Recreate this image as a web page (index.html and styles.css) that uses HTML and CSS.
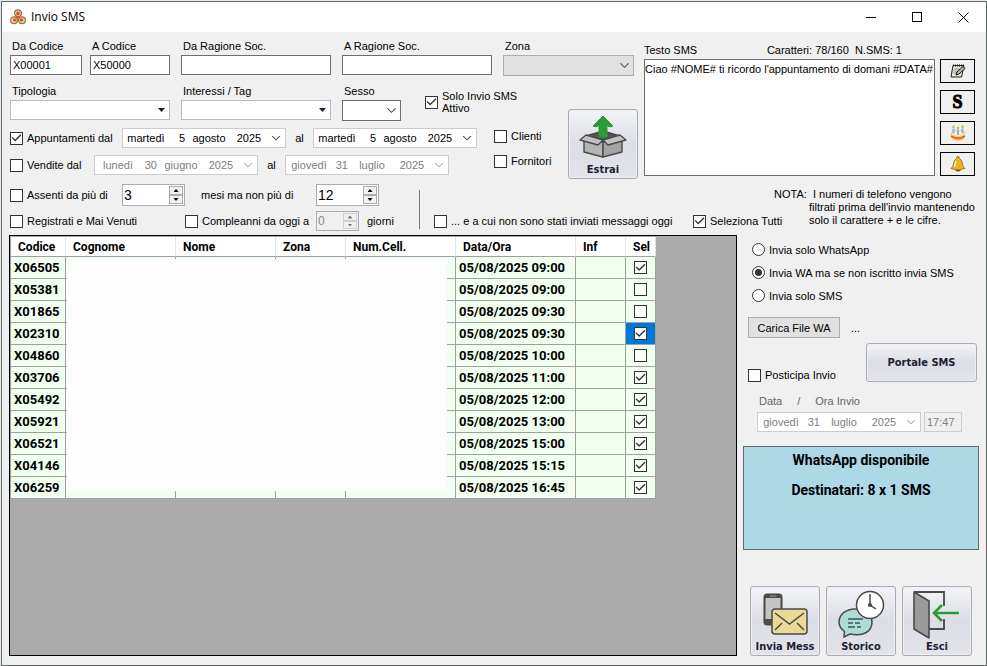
FILE: index.html
```html
<!DOCTYPE html>
<html lang="it">
<head>
<meta charset="utf-8">
<title>Invio SMS</title>
<link rel="stylesheet" href="styles.css">
</head>
<body>
<main class="window">
  <header class="titlebar">
    <svg class="app-icon" width="16" height="16" viewBox="0 0 16 16"><g fill="#e8dcb8" stroke="#8a7442" stroke-width="1.2"><circle cx="8" cy="4.2" r="3.4"/><circle cx="4" cy="11.3" r="3.4"/><circle cx="12" cy="11.3" r="3.4"/></g><g fill="#e8541c"><circle cx="8" cy="4.6" r="2"/><circle cx="4.6" cy="11" r="1.8"/><circle cx="11.6" cy="11" r="1.8"/><circle cx="8" cy="8.8" r="1.2"/></g></svg>
    <h1>Invio SMS</h1>
    <div class="window-buttons">
      <button type="button" aria-label="Riduci"><svg width="11" height="11" viewBox="0 0 11 11"><path d="M0 5.5H10" stroke="#000"/></svg></button>
      <button type="button" aria-label="Ingrandisci"><svg width="11" height="11" viewBox="0 0 11 11"><rect x=".5" y=".5" width="9" height="9" fill="none" stroke="#000"/></svg></button>
      <button type="button" aria-label="Chiudi"><svg width="11" height="11" viewBox="0 0 11 11"><path d="M.5 .5L10.5 10.5M10.5 .5L.5 10.5" stroke="#000"/></svg></button>
    </div>
  </header>

  <form class="content">
    <div class="top">
      <section class="filters">
        <div class="fields">
          <div class="pair">
            <div class="field code-from"><label for="dc">Da Codice</label><input id="dc" type="text" value="X00001"></div>
            <div class="field code-to"><label for="ac">A Codice</label><input id="ac" type="text" value="X50000"></div>
          </div>
          <div class="field"><label for="dr">Da Ragione Soc.</label><input id="dr" type="text"></div>
          <div class="field"><label for="ar">A Ragione Soc.</label><input id="ar" type="text"></div>
          <div class="field"><label for="zona">Zona</label><span class="combo off"><select id="zona" disabled><option></option></select><i class="chevron"></i></span></div>
        </div>
        <div class="lower">
          <div class="lower-rows">
            <div class="fields second">
              <div class="field"><label for="tip">Tipologia</label><span class="combo flat"><select id="tip"><option></option></select><i class="triangle"></i></span></div>
              <div class="field"><label for="int">Interessi / Tag</label><span class="combo flat"><select id="int"><option></option></select><i class="triangle"></i></span></div>
              <div class="gender">
                <div class="field sex"><label for="sex">Sesso</label><span class="combo"><select id="sex"><option></option></select><i class="chevron"></i></span></div>
                <label class="check active-only"><input type="checkbox" checked><span>Solo Invio SMS<br>Attivo</span></label>
              </div>
            </div>
            <div class="scope">
              <div class="ranges">
                <div class="range">
                  <label class="check first"><input type="checkbox" checked><span>Appuntamenti dal</span></label>
                  <button type="button" class="date"><span>martedì</span><span class="day">5</span><span>agosto</span><span>2025</span><i class="chevron"></i></button>
                  <span class="to">al</span>
                  <button type="button" class="date"><span>martedì</span><span class="day">5</span><span>agosto</span><span>2025</span><i class="chevron"></i></button>
                </div>
                <div class="range">
                  <label class="check second-label"><input type="checkbox"><span>Vendite dal</span></label>
                  <button type="button" class="date" disabled><span>lunedì</span><span class="day">30</span><span>giugno</span><span>2025</span><i class="chevron"></i></button>
                  <span class="to">al</span>
                  <button type="button" class="date" disabled><span>giovedì</span><span class="day">31</span><span>luglio</span><span>2025</span><i class="chevron"></i></button>
                </div>
              </div>
              <div class="who">
                <label class="check"><input type="checkbox"><span>Clienti</span></label>
                <label class="check"><input type="checkbox"><span>Fornitori</span></label>
              </div>
            </div>
          </div>
          <button type="button" class="tile">
            <svg width="50" height="46" viewBox="0 0 50 46"><g stroke="#4a4a4a" stroke-width="1.4" stroke-linejoin="round"><path d="M8 23L25 18L42 23L25 28Z" fill="#555"/><path d="M6 25L25 29V44L6 39Z" fill="#b4b4b4"/><path d="M44 25L25 29V44L44 39Z" fill="#a4a4a4"/><path d="M8 22L25 27L20 32L2 27Z" fill="#c2c2c2"/><path d="M42 22L25 27L30 32L48 27Z" fill="#c2c2c2"/></g><path d="M25 3L35 13Q32 15 29 12.500V24H21V12.500Q18 15 15 13Z" fill="#2a9b35" stroke="#2a9b35" stroke-linejoin="round"/></svg>
            <span>Estrai</span>
          </button>
        </div>
      </section>

      <section class="message">
        <div class="message-head"><label for="msg">Testo SMS</label><output>Caratteri: 78/160 &nbsp;N.SMS: 1</output></div>
        <div class="message-body">
          <textarea id="msg" wrap="off">Ciao #NOME# ti ricordo l'appuntamento di domani #DATA#</textarea>
          <div class="tools">
            <button type="button" aria-label="Modifica testo"><svg width="16" height="16" viewBox="0 0 16 16"><path d="M3 2.500H14L11.500 14H1Z" fill="#e8e6de" stroke="#222"/><path d="M3 2.500H14" stroke="#111" stroke-width="2" stroke-dasharray="1 1"/><path d="M4 6H10M3.500 8H8M3 10H7" stroke="#999"/><path d="M6 12L7 9L13 3.500L15 5.500L9 11Z" fill="#c9b89a" stroke="#111"/></svg></button>
            <button type="button" class="letter">S</button>
            <button type="button" aria-label="Compleanno"><svg width="16" height="16" viewBox="0 0 16 16"><path d="M1 8V12Q2 15.500 8 15.500T15 12V8Z" fill="#f0b548"/><ellipse cx="8" cy="8.500" rx="7" ry="3" fill="#fff2c4" stroke="#f3cf6c"/><path d="M1 11Q8 15.500 15 11" stroke="#e2522d" stroke-width="1.400" fill="none"/><path d="M3.500 3.500V8.500M8 5V10M12.500 3.500V8.500" stroke="#7fb0f0" stroke-width="2"/><path d="M3.500 .5V3M8 2V4.500M12.500 .5V3" stroke="#c9b022" stroke-width="1.800"/></svg></button>
            <button type="button" aria-label="Promemoria"><svg width="16" height="16" viewBox="0 0 16 16"><path d="M7 .8H9L9.500 2.500Q12 3.500 12.500 8Q12.800 11 15 12.500L8 14L1 12.500Q3.200 11 3.500 8Q4 3.500 6.500 2.500Z" fill="#e9b425" stroke="#a87412"/><path d="M6 5Q5 8 4.500 11" stroke="#fff3a6" stroke-width="1.500" fill="none"/><path d="M5 14Q8 17 11 14Z" fill="#6b4a10"/></svg></button>
          </div>
        </div>
      </section>
    </div>

    <div class="criteria">
      <div class="criteria-rows">
        <div class="criteria-row">
          <label class="check absent"><input type="checkbox"><span>Assenti da più di</span></label>
          <span class="spin"><input type="text" value="3" aria-label="Mesi minimi"><span class="steps"><button type="button" aria-label="Aumenta"><i></i></button><button type="button" aria-label="Riduci"><i></i></button></span></span>
          <span class="months">mesi ma non più di</span>
          <span class="spin"><input type="text" value="12" aria-label="Mesi massimi"><span class="steps"><button type="button" aria-label="Aumenta"><i></i></button><button type="button" aria-label="Riduci"><i></i></button></span></span>
        </div>
        <div class="criteria-row">
          <label class="check registered"><input type="checkbox"><span>Registrati e Mai Venuti</span></label>
          <label class="check birthdays"><input type="checkbox"><span>Compleanni da oggi a</span></label>
          <span class="spin small"><input type="text" value="0" disabled aria-label="Giorni"><span class="steps"><button type="button" disabled aria-label="Aumenta"><i></i></button><button type="button" disabled aria-label="Riduci"><i></i></button></span></span>
          <span class="days">giorni</span>
        </div>
      </div>
      <div class="divider"></div>
      <label class="check not-sent"><input type="checkbox"><span>... e a cui non sono stati inviati messaggi oggi</span></label>
      <label class="check all"><input type="checkbox" checked><span>Seleziona Tutti</span></label>
      <p class="note">NOTA: &nbsp;I numeri di telefono vengono<br>filtrati prima dell'invio mantenendo<br>solo il carattere + e le cifre.</p>
    </div>

    <div class="bottom">
      <div class="grid-panel">
        <table>
          <colgroup><col class="c55"><col class="c110"><col class="c100"><col class="c70"><col class="c110"><col class="c120"><col class="c50"><col class="c30"></colgroup>
          <thead><tr><th>Codice</th><th>Cognome</th><th>Nome</th><th>Zona</th><th>Num.Cell.</th><th>Data/Ora</th><th>Inf</th><th>Sel</th></tr></thead>
          <tbody>
            <tr><td>X06505</td><td></td><td></td><td></td><td></td><td>05/08/2025 09:00</td><td></td><td><input type="checkbox" aria-label="X06505" checked></td></tr>
            <tr><td>X05381</td><td></td><td></td><td></td><td></td><td>05/08/2025 09:00</td><td></td><td><input type="checkbox" aria-label="X05381"></td></tr>
            <tr><td>X01865</td><td></td><td></td><td></td><td></td><td>05/08/2025 09:30</td><td></td><td><input type="checkbox" aria-label="X01865"></td></tr>
            <tr><td>X02310</td><td></td><td></td><td></td><td></td><td>05/08/2025 09:30</td><td></td><td class="current"><input type="checkbox" aria-label="X02310" checked></td></tr>
            <tr><td>X04860</td><td></td><td></td><td></td><td></td><td>05/08/2025 10:00</td><td></td><td><input type="checkbox" aria-label="X04860"></td></tr>
            <tr><td>X03706</td><td></td><td></td><td></td><td></td><td>05/08/2025 11:00</td><td></td><td><input type="checkbox" aria-label="X03706" checked></td></tr>
            <tr><td>X05492</td><td></td><td></td><td></td><td></td><td>05/08/2025 12:00</td><td></td><td><input type="checkbox" aria-label="X05492" checked></td></tr>
            <tr><td>X05921</td><td></td><td></td><td></td><td></td><td>05/08/2025 13:00</td><td></td><td><input type="checkbox" aria-label="X05921" checked></td></tr>
            <tr><td>X06521</td><td></td><td></td><td></td><td></td><td>05/08/2025 15:00</td><td></td><td><input type="checkbox" aria-label="X06521" checked></td></tr>
            <tr><td>X04146</td><td></td><td></td><td></td><td></td><td>05/08/2025 15:15</td><td></td><td><input type="checkbox" aria-label="X04146" checked></td></tr>
            <tr><td>X06259</td><td></td><td></td><td></td><td></td><td>05/08/2025 16:45</td><td></td><td><input type="checkbox" aria-label="X06259" checked></td></tr>
          </tbody>
        </table>
        <div class="veil"></div>
      </div>

      <aside class="side">
        <div class="radios">
          <label><input type="radio" name="mode"><span>Invia solo WhatsApp</span></label>
          <label><input type="radio" name="mode" checked><span>Invia WA ma se non iscritto invia SMS</span></label>
          <label><input type="radio" name="mode"><span>Invia solo SMS</span></label>
        </div>
        <div class="upload"><button type="button">Carica File WA</button><span>...</span></div>
        <div class="portal-row">
          <label class="check"><input type="checkbox"><span>Posticipa Invio</span></label>
          <button type="button" class="portal">Portale SMS</button>
        </div>
        <div class="schedule">
          <div class="schedule-labels"><span>Data</span><span>/</span><label for="time">Ora Invio</label></div>
          <div class="schedule-inputs">
            <button type="button" class="date" disabled><span>giovedì</span><span class="day">31</span><span>luglio</span><span>2025</span><i class="chevron"></i></button>
            <input id="time" type="text" value="17:47" disabled>
          </div>
        </div>
        <div class="status"><p>WhatsApp disponibile</p><p>Destinatari: 8 x 1 SMS</p></div>
        <div class="actions">
          <button type="button" class="tile">
            <svg width="50" height="46" viewBox="0 0 50 46"><rect x="4" y="4" width="18" height="31" rx="2.500" fill="#4d4d4d" stroke="#444"/><rect x="5.500" y="8" width="15" height="21" fill="#c9c4c4"/><path d="M10 6H16" stroke="#999"/><rect x="12" y="19" width="35" height="25" rx="3" fill="#e8d995" stroke="#4a4a4a" stroke-width="1.500"/><path d="M15 23L29.500 34L44 23M15 40L22 33M44 40L37 33" fill="none" stroke="#4a4a4a" stroke-width="1.500"/></svg>
            <span>Invia Mess</span>
          </button>
          <button type="button" class="tile">
            <svg width="50" height="48" viewBox="0 0 50 48"><path d="M19 19C10 19 3 24.500 3 32C3 36 5 39 8.500 41.500L8 47L14 44C28 47 36 41 36 32C36 24 29 19 19 19Z" fill="#aedbd6" stroke="#4a4a4a" stroke-width="1.500"/><path d="M12 29H27M12 33H17M19 33H24M12 37H19M21 37H25" stroke="#3b5557" stroke-width="1.500"/><circle cx="34" cy="15" r="13.500" fill="#fff" stroke="#4a4a4a" stroke-width="1.500"/><circle cx="34" cy="15" r="2" fill="#4a4a4a"/><path d="M34 4V15L40 19" fill="none" stroke="#4a4a4a" stroke-width="1.500"/></svg>
            <span>Storico</span>
          </button>
          <button type="button" class="tile">
            <svg width="50" height="50" viewBox="0 0 50 50"><path d="M2 2H32V16M32 29V39H17" fill="none" stroke="#4a4a4a" stroke-width="1.800"/><path d="M2 2L17 11V48L2 39Z" fill="#9b9b9b" stroke="#4a4a4a" stroke-width="1.600" stroke-linejoin="round"/><path d="M47 23H23M30 15L22 23L30 31" fill="none" stroke="#2a9b35" stroke-width="2.600"/></svg>
            <span>Esci</span>
          </button>
        </div>
      </aside>
    </div>
  </form>
</main>
</body>
</html>
```
FILE: styles.css
```css
* { box-sizing: border-box; }

body {
  margin: 0;
  background: #e3eced;
  color: #000;
  font: 11px/16px "Liberation Sans", Arial, sans-serif;
}

button, input, select, textarea {
  margin: 0;
  font: inherit;
  color: inherit;
  border-radius: 0;
}

.window {
  display: flex;
  flex-direction: column;
  min-height: calc(100vh - 1px);
  margin: 1px 0 0 1px;
  border: 1px solid #5f6664;
  background: #f0f0f0;
}

.titlebar {
  display: flex;
  align-items: center;
  height: 30px;
  padding-left: 8px;
  background: #fff;
}

.titlebar h1 {
  flex: 1;
  margin: 0 0 0 5px;
  font: 12px/16px "Open Sans", sans-serif;
}

.window-buttons { display: flex; }

.window-buttons button {
  display: grid;
  place-items: center;
  width: 46px;
  height: 30px;
  padding: 0;
  border: 0;
  background: none;
}

.content {
  flex: 1;
  display: flex;
  flex-direction: column;
  padding: 6px 6px 9px 8px;
}

/* Shared controls */

input[type="text"] {
  width: 100%;
  height: 20px;
  padding: 0 2px;
  border: 1px solid #6e6e6e;
  background: #fff;
}

input[type="checkbox"],
input[type="radio"] {
  appearance: none;
  flex: none;
  display: grid;
  place-items: center;
  width: 13px;
  height: 13px;
  border: 1px solid #333;
  background: #fff;
}

input[type="radio"] { border-radius: 50%; }

input[type="checkbox"]:checked::before {
  content: "";
  width: 11px;
  height: 11px;
  background: #333;
  clip-path: polygon(5% 48%, 14% 40%, 38% 64%, 86% 16%, 95% 25%, 38% 82%);
}

input[type="radio"]:checked::before {
  content: "";
  width: 7px;
  height: 7px;
  border-radius: 50%;
  background: #333;
}

.check {
  display: flex;
  align-items: center;
  flex: none;
  gap: 4px;
  white-space: nowrap;
}

.combo { display: grid; height: 21px; }

.combo > * { grid-area: 1 / 1; }

.combo select {
  appearance: none;
  width: 100%;
  height: 100%;
  border: 1px solid #6e6e6e;
  background: #fff;
}

.combo.flat { height: 20px; }
.combo.flat select { border-color: #b8bac6; }

.combo.off select {
  border-color: #adadad;
  background: #e1e1e1;
  opacity: 1;
}

.combo i {
  justify-self: end;
  align-self: center;
  margin-right: 5px;
  pointer-events: none;
}

.chevron {
  width: 9px;
  height: 5px;
  background: #444;
  clip-path: polygon(0 10%, 10% 0, 50% 76%, 90% 0, 100% 10%, 50% 100%);
}

.triangle {
  width: 7px;
  height: 4px;
  background: #1e1e32;
  clip-path: polygon(0 0, 100% 0, 50% 100%);
}

.date {
  display: grid;
  grid-template-columns: 42px 18px 48px 32px 22px;
  align-items: center;
  justify-items: center;
  flex: none;
  width: 164px;
  height: 20px;
  padding: 0 0 0 2px;
  border: 1px solid #ccc;
  background: #fff;
}

.date .day { justify-self: end; }
.date:disabled { color: #7d7d7d; }
.date:disabled .chevron { background: #aaa; }

.tile, .portal {
  border: 1px solid #a9abb8;
  border-radius: 3px;
  background: linear-gradient(#f3f4f7, #dcdee5 50%, #e3e4ea);
  box-shadow: inset 0 0 0 1px #eeeff3;
  color: #1e1e32;
  font: bold 11px/14px "DejaVu Sans Condensed", "DejaVu Sans", sans-serif;
}

.tile {
  display: flex;
  flex-direction: column;
  align-items: center;
  justify-content: space-between;
  flex: none;
  width: 70px;
  height: 70px;
  padding: 3px 0 1px;
  white-space: nowrap;
}

/* Filters */

.top { display: flex; gap: 6px; }
.filters { flex: none; width: 628px; }

.fields {
  display: grid;
  grid-template-columns: 160px 150px 150px 131px;
  column-gap: 11px;
}

.field {
  display: flex;
  flex-direction: column;
  gap: 1px;
}

.field label { padding-left: 2px; }
.pair { display: flex; gap: 8px; }
.code-from { width: 72px; }
.code-to { width: 80px; }

.lower {
  display: flex;
  justify-content: space-between;
  align-items: flex-end;
  margin-top: 7px;
}

.lower-rows {
  display: flex;
  flex-direction: column;
  gap: 7px;
  padding-bottom: 4px;
}

.second { grid-template-columns: 160px 150px auto; }
.gender { display: flex; gap: 24px; }
.sex { width: 59px; }
.active-only { line-height: 12px; }

.scope { display: flex; gap: 17px; }
.ranges { display: flex; flex-direction: column; gap: 7px; }
.range { display: flex; align-items: center; }
.first { width: 112px; }
.second-label { width: 84px; }
.to { width: 27px; text-align: center; }
.who { display: flex; flex-direction: column; gap: 9px; }

/* Message */

.message {
  flex: 1;
  padding: 4px 5px 0 0;
}

.message-head {
  display: flex;
  justify-content: space-between;
  margin-bottom: 1px;
  padding-right: 73px;
}

.message-body { display: flex; gap: 5px; }

textarea {
  flex: 1;
  min-width: 0;
  padding: 1px 0;
  border: 1px solid #6e6e6e;
  background: #fff;
  overflow: hidden;
  resize: none;
  white-space: pre;
}

.tools {
  display: flex;
  flex-direction: column;
  gap: 7px;
}

.tools button {
  display: grid;
  place-items: center;
  width: 35px;
  height: 24px;
  padding: 0;
  border: 1px solid #000;
  background: #f0f0f0;
}

.tools .letter {
  font: bold 18px/20px "Liberation Serif", serif;
  -webkit-text-stroke: 1px #000;
}

/* Criteria */

.criteria {
  display: flex;
  align-items: flex-end;
  padding: 5px 0 4px;
}

.criteria-rows {
  display: flex;
  flex-direction: column;
  flex: none;
  gap: 5px;
  width: 409px;
}

.criteria-row { display: flex; align-items: center; }

.spin {
  display: flex;
  align-items: center;
  flex: none;
  width: 63px;
  height: 22px;
  padding-right: 1px;
  border: 1px solid #a9abb8;
  background: #fff;
}

.spin input[type="text"] {
  flex: 1;
  min-width: 0;
  padding: 0 1px;
  border: 0;
  font-size: 14px;
}

.spin.small { width: 43px; height: 20px; background: #f0f0f0; }

.spin.small input[type="text"] {
  height: 16px;
  background: none;
  color: #888;
  font-size: 12px;
}

.steps {
  display: flex;
  flex-direction: column;
  flex: none;
  width: 14px;
  height: 100%;
  padding: 1px 0;
}

.steps button {
  display: grid;
  place-items: center;
  flex: 1;
  padding: 0;
  border: 1px solid #adadad;
  background: #f0f0f0;
}

.steps i {
  width: 5px;
  height: 3px;
  background: #000;
  clip-path: polygon(50% 0, 100% 100%, 0 100%);
}

.steps button:last-child i { clip-path: polygon(0 0, 100% 0, 50% 100%); }
.steps button:disabled { border-color: #d0d0d0; }
.steps button:disabled i { background: #777; }

.absent { width: 112px; }
.months { width: 131px; padding-left: 16px; }
.registered { width: 175px; }
.birthdays { width: 131px; }
.days { padding-left: 8px; }

.divider {
  flex: none;
  width: 1px;
  height: 39px;
  margin-bottom: 2px;
  background: #7a7a7a;
}

.not-sent { width: 259px; margin: 0 0 2px 14px; }
.all { width: 91px; margin-bottom: 2px; }

.note {
  flex: none;
  align-self: flex-start;
  margin: 4px 0 0 25px;
  line-height: 13px;
  text-indent: -35px;
  white-space: nowrap;
}

/* Recipients grid */

.bottom { flex: 1; display: flex; gap: 6px; }

.grid-panel {
  position: relative;
  flex: 1;
  min-width: 0;
  margin-left: -1px;
  padding-top: 1px;
  border: 1px solid #000;
  background: #ababab;
}

table {
  width: 645px;
  border-collapse: separate;
  border-spacing: 0;
  border-left: 1px solid #a0a0a0;
  table-layout: fixed;
  font: bold 13px/16px Roboto, sans-serif;
}

.c30 { width: 30px; }
.c50 { width: 50px; }
.c55 { width: 55px; }
.c70 { width: 70px; }
.c100 { width: 100px; }
.c110 { width: 110px; }
.c120 { width: 120px; }

th, td {
  height: 22px;
  padding: 0 3px;
  border-right: 1px solid #a0a0a0;
  border-bottom: 1px solid #a0a0a0;
  background: #f0fff0;
  text-align: left;
  white-space: nowrap;
}

th {
  height: 20px;
  padding: 0 7px;
  border-right-color: #e2e2e2;
  background: #fff;
  font-size: 12px;
}

td input { margin: 0 auto; }
.current { background: #0078d7; }

.veil {
  position: absolute;
  top: 23px;
  left: 57px;
  width: 380px;
  height: 232px;
  background: #fdfdfd;
}

/* Side panel */

.side {
  display: flex;
  flex-direction: column;
  flex: none;
  width: 237px;
  padding: 3px 1px 0 0;
}

.radios label {
  display: flex;
  align-items: center;
  gap: 4px;
  height: 23px;
  padding-left: 9px;
}

.upload {
  display: flex;
  align-items: center;
  gap: 11px;
  margin: 10px 0 5px 5px;
}

.upload button {
  width: 92px;
  height: 21px;
  padding: 0;
  border: 1px solid #adadad;
  background: #e1e1e1;
}

.portal-row {
  display: flex;
  justify-content: space-between;
  align-items: flex-end;
  padding: 0 2px 0 5px;
}

.portal-row .check { line-height: 14px; }

.portal { width: 111px; height: 39px; padding: 0; }
.schedule { margin-top: 11px; padding-left: 14px; }

.schedule-labels {
  display: flex;
  gap: 15px;
  padding-left: 2px;
  color: #666;
}

.schedule-inputs { display: flex; gap: 3px; margin-top: 3px; }

.schedule-inputs input[type="text"] {
  width: 38px;
  border-color: #ccc;
  background: #f0f0f0;
  color: #7d7d7d;
}

.status {
  height: 104px;
  margin-top: 14px;
  padding-top: 5px;
  border: 1px solid #5f6a6e;
  background: #add8e6;
  font: bold 14px/16px Roboto, sans-serif;
  text-align: center;
}

.status p { margin: 0 0 14px; }

.actions {
  display: flex;
  gap: 6px;
  margin-top: auto;
  padding-left: 7px;
}
```
